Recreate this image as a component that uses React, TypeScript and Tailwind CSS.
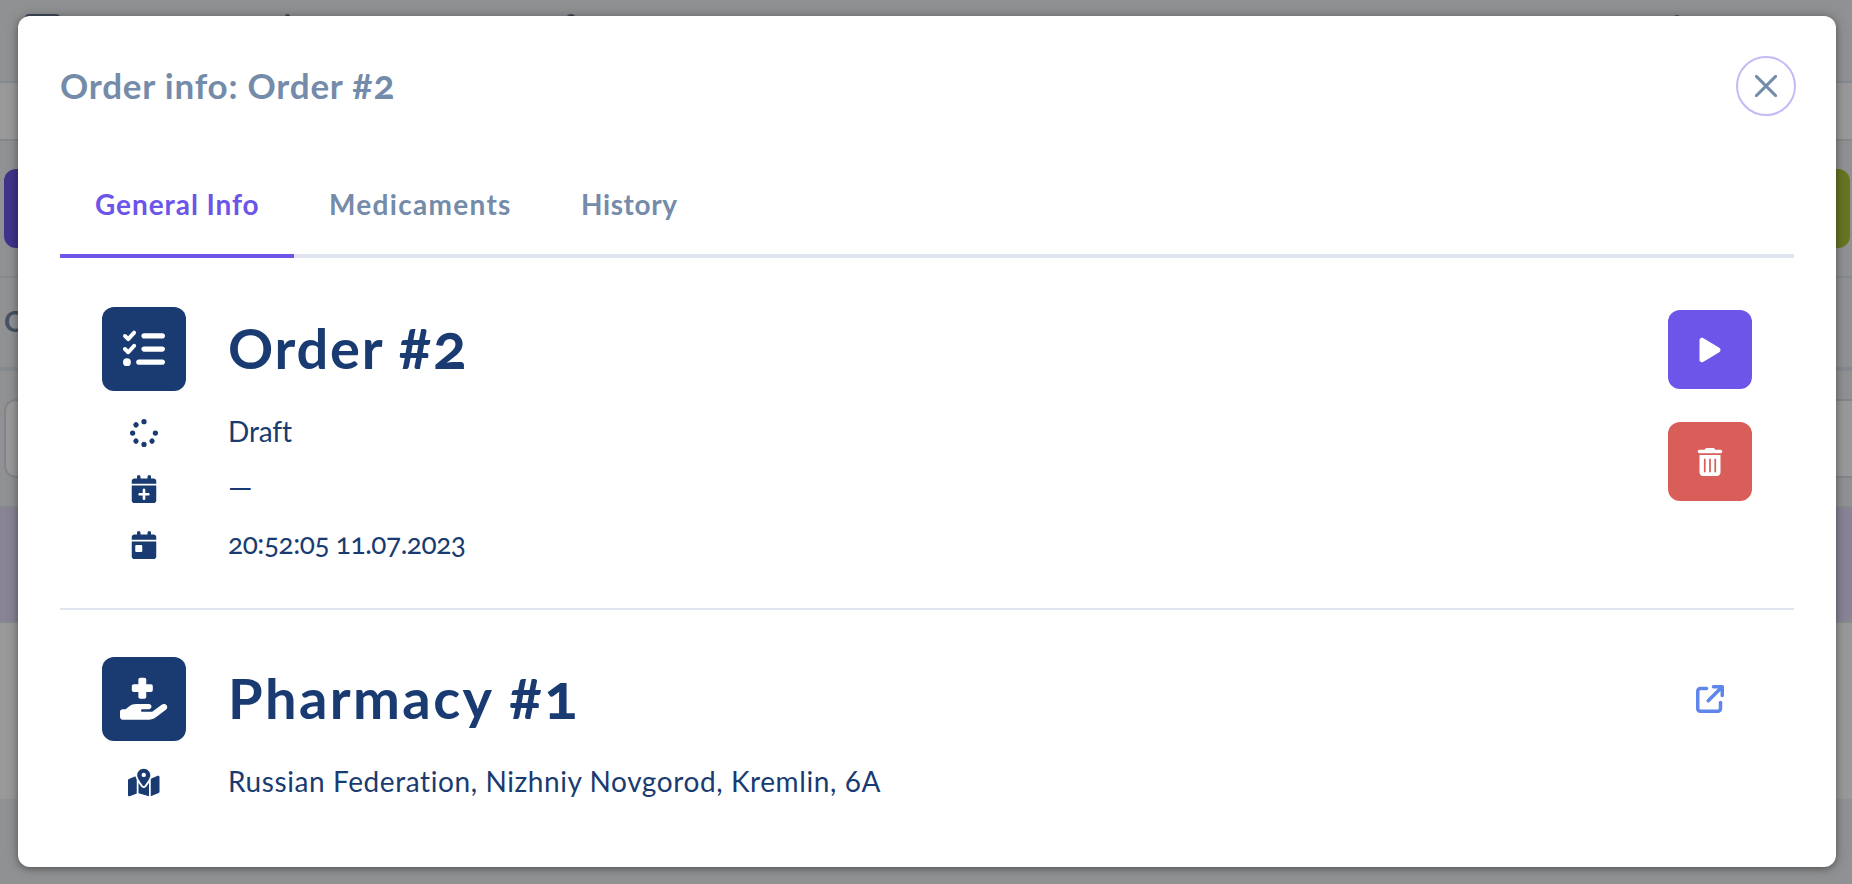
import type { ReactNode } from "react";
import {
  FaArrowUpRightFromSquare,
  FaCalendarDay,
  FaCalendarPlus,
  FaHandHoldingMedical,
  FaListCheck,
  FaMapLocationDot,
  FaPlay,
  FaSpinner,
  FaTrashCan,
} from "react-icons/fa6";

function Backdrop() {
  return (
    <div className="flex h-full flex-col bg-[#f0f2f5]">
      <div className="flex h-[83px] shrink-0 items-start border-b-2 border-[#dee7ee] pt-[14px]">
        <div className="ml-[25px] h-1 w-[35px] rounded-t-sm bg-[#6b7c93]" />
        <div className="ml-[225px] h-2 w-[5px] rounded-t bg-[#6b7c93]" />
        <div className="ml-[276px] h-2 w-[10px] rounded-t-full bg-[#6b7c93]" />
        <div className="ml-[1099px] mt-px h-2 w-1 bg-[#8b95a5]" />
      </div>
      <div className="h-[58px] shrink-0 border-b-2 border-[#dee2e6] bg-white" />
      <div className="flex h-[137px] shrink-0 items-center justify-between border-b-2 border-[#dee7ee] pl-1 pr-0.5">
        <div className="h-[79px] w-[84px] rounded-xl bg-[#6c55e8]" />
        <div className="h-[79px] w-[84px] rounded-xl bg-[#aac53a]" />
      </div>
      <div className="flex h-[93px] shrink-0 items-center border-b-4 border-[#dee7ee] pb-1 pl-1 text-[28px] font-bold text-[#748ba9]">
        Orders
      </div>
      <div className="flex h-[137px] shrink-0 items-center border-b-2 border-[#dfe7ea] pl-1">
        <div className="h-[79px] flex-1 rounded-l-xl border-2 border-r-0 border-[#dddee6] bg-white" />
      </div>
      <div className="h-[115px] shrink-0 border-b-2 border-[#dee7ee] bg-[#e4dcf9]" />
      <div className="h-[176px] shrink-0 bg-white" />
    </div>
  );
}

function IconTile({ children }: { children: ReactNode }) {
  return (
    <div className="flex size-[84px] items-center justify-center rounded-xl bg-[#193b71] text-[42px] text-white">
      {children}
    </div>
  );
}

function DetailRow({ icon, children }: { icon: ReactNode; children: ReactNode }) {
  return (
    <div className="flex h-14 items-center gap-[42px] text-[28px]">
      <div className="flex w-[84px] justify-center">{icon}</div>
      <div className="-mt-[5px] whitespace-nowrap">{children}</div>
    </div>
  );
}

export default function App() {
  return (
    <div className="relative h-[884px] w-[1852px] overflow-hidden font-['Lato',sans-serif]">
      <Backdrop />
      <div className="absolute inset-0 flex bg-black/40 px-4 pb-[17px] pl-[18px] pt-4">
        <section className="flex flex-1 flex-col rounded-xl bg-white pt-10 text-[#193b71] shadow-[0_2px_6px_rgba(0,0,0,0.3),0_0_14px_rgba(0,0,0,0.2)]">
          <header className="flex h-[60px] shrink-0 items-center justify-between pl-[42px] pr-10">
            <h1 className="-mt-1 text-[35px] font-bold leading-none tracking-[0.8px] text-[#748ba9]">
              Order info: Order #<span className="text-[1.12em] leading-none oldstyle-nums">2</span>
            </h1>
            <button className="flex size-[60px] items-center justify-center rounded-full border-2 border-[#c5b9f6] text-[#748ba9]">
              <svg viewBox="0 0 22 22" className="size-[22px]" fill="none" stroke="currentColor" strokeWidth="2.9" strokeLinecap="round">
                <path d="M1.4 1.4 20.6 20.6M20.6 1.4 1.4 20.6" />
              </svg>
            </button>
          </header>

          <nav className="mx-[42px] mt-[38px] flex h-[104px] shrink-0 border-b-4 border-[#dfe4ef] text-[28px] font-bold text-[#748ba9]">
            <div className="-mb-1 flex w-[234px] items-center whitespace-nowrap border-b-4 border-[#6c55e8] pl-[35px] tracking-[0.93px] text-[#6c55e8]">
              General Info
            </div>
            <div className="flex w-[252px] items-center pl-[35px] tracking-[1.3px]">Medicaments</div>
            <div className="flex items-center pl-[35px] tracking-[0.6px]">History</div>
          </nav>

          <div className="mx-[42px] flex h-[352px] shrink-0 justify-between border-b-2 border-[#dfe4ef] px-[42px] pt-[49px]">
            <div>
              <div className="mb-3.5 flex items-center gap-[42px]">
                <IconTile>
                  <FaListCheck />
                </IconTile>
                <h2 className="-mt-[7px] text-[56px] font-bold leading-none tracking-[1.8px]">
                  Order #<span className="text-[1.12em] leading-none oldstyle-nums">2</span>
                </h2>
              </div>
              <DetailRow icon={<FaSpinner />}>
                <span className="tracking-[-0.1px]">Draft</span>
              </DetailRow>
              <DetailRow icon={<FaCalendarPlus />}>
                <span className="text-[31px] leading-none">—</span>
              </DetailRow>
              <DetailRow icon={<FaCalendarDay />}>
                <span className="oldstyle-nums tracking-[-0.45px]">20:52:05 11.07.2023</span>
              </DetailRow>
            </div>
            <div className="flex flex-col gap-[33px] pt-[3px] text-[28px] text-white">
              <button className="flex h-[79px] w-[84px] items-center justify-center rounded-xl bg-[#6c55e8]">
                <FaPlay />
              </button>
              <button className="flex h-[79px] w-[84px] items-center justify-center rounded-xl bg-[#d95d59]">
                <FaTrashCan />
              </button>
            </div>
          </div>

          <div className="mx-[42px] flex justify-between px-[42px] pt-[47px]">
            <div>
              <div className="mb-3.5 flex items-center gap-[42px]">
                <IconTile>
                  <FaHandHoldingMedical className="size-[1.125em]" />
                </IconTile>
                <h2 className="-mt-[7px] text-[56px] font-bold leading-none tracking-[2.4px]">
                  Pharmacy #<span className="text-[1.12em] leading-none oldstyle-nums">1</span>
                </h2>
              </div>
              <DetailRow icon={<FaMapLocationDot className="size-[1.125em]" />}>
                <span className="tracking-[0.59px]">Russian Federation, Nizhniy Novgorod, Kremlin, 6A</span>
              </DetailRow>
            </div>
            <a className="flex size-[84px] items-center justify-center text-[28px] text-[#5f86ed]">
              <FaArrowUpRightFromSquare />
            </a>
          </div>
        </section>
      </div>
    </div>
  );
}
